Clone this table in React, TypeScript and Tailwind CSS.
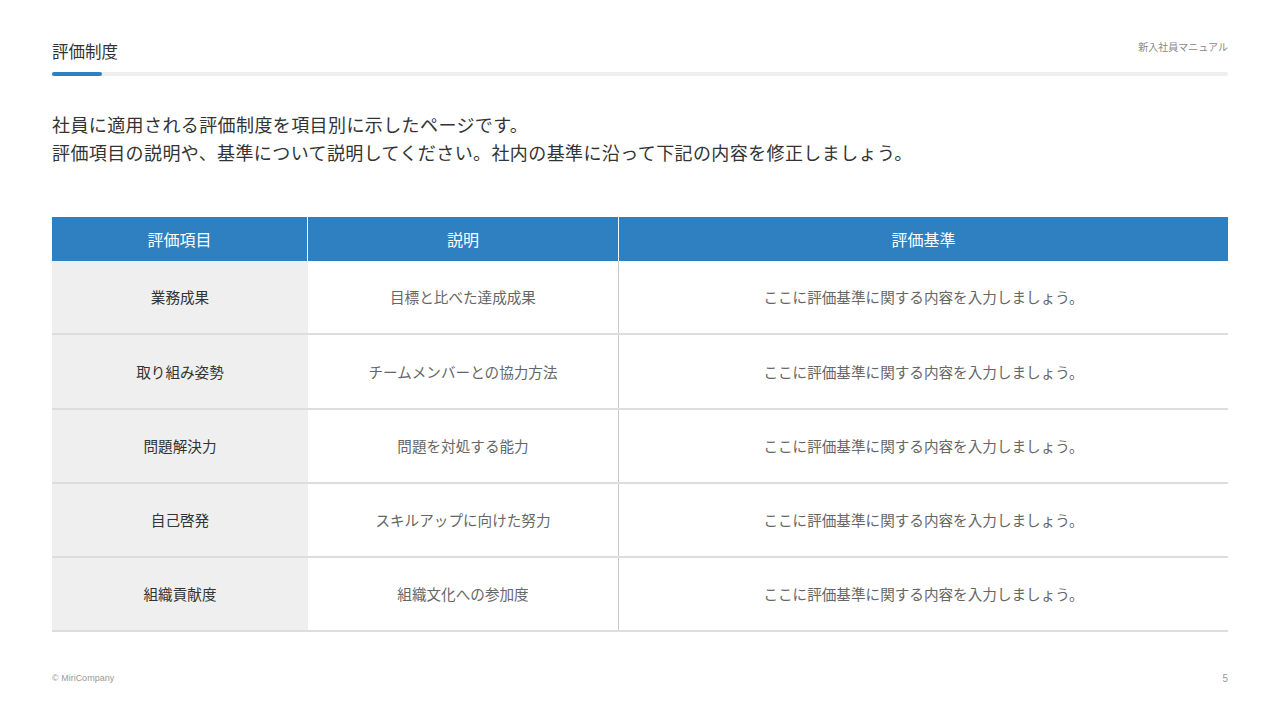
import React from 'react';

const ROWS = [
  { item: '業務成果', desc: '目標と比べた達成成果' },
  { item: '取り組み姿勢', desc: 'チームメンバーとの協力方法' },
  { item: '問題解決力', desc: '問題を対処する能力' },
  { item: '自己啓発', desc: 'スキルアップに向けた努力' },
  { item: '組織貢献度', desc: '組織文化への参加度' },
];

const CRITERIA = 'ここに評価基準に関する内容を入力しましょう。';

export default function App() {
  return (
    <div
      className="w-[1280px] h-[720px] bg-white px-[52px] flex flex-col text-[#333]"
      style={{ fontFamily: '"Noto Sans CJK JP", "Noto Sans", sans-serif' }}
    >
      {/* header */}
      <div className="flex justify-between items-end pt-[40px] h-[66px]">
        <h1 className="text-[16.5px] leading-[24px] text-[#333] mb-[3px]">評価制度</h1>
        <span className="text-[10px] leading-[14px] text-[#888] mb-[12px]">新入社員マニュアル</span>
      </div>
      <div className="mt-[6px] h-[4px] bg-[#eeeeee] rounded-full flex">
        <div className="w-[50px] h-full bg-[#2f80c0] rounded-full" />
      </div>

      {/* intro */}
      <div className="mt-[34px] text-[18px] leading-[28px] tracking-[0.4px] text-[#333]">
        <p>社員に適用される評価制度を項目別に示したページです。</p>
        <p>評価項目の説明や、基準について説明してください。社内の基準に沿って下記の内容を修正しましょう。</p>
      </div>

      {/* table */}
      <div className="mt-[51px]">
        <div className="flex h-[44px] bg-[#2f80c0] text-white text-[16px]">
          <div className="w-[256px] flex items-center justify-center border-r border-white">評価項目</div>
          <div className="w-[311px] flex items-center justify-center border-r border-white">説明</div>
          <div className="flex-1 flex items-center justify-center">評価基準</div>
        </div>
        {ROWS.map((r) => (
          <div key={r.item} className="flex h-[74.3px] border-b-2 border-[#dddddd] text-[14.6px]">
            <div className="w-[256px] bg-[#efefef] flex items-center justify-center text-[#333]">
              {r.item}
            </div>
            <div className="w-[311px] flex items-center justify-center text-[#666] border-r border-[#cccccc]">
              {r.desc}
            </div>
            <div className="flex-1 flex items-center justify-center text-[#666]">{CRITERIA}</div>
          </div>
        ))}
      </div>

      {/* footer */}
      <div className="mt-auto mb-[34px] flex justify-between items-center text-[9px] text-[#999]">
        <span style={{ fontFamily: '"Liberation Sans", sans-serif' }}>© MiriCompany</span>
        <span className="text-[10px]" style={{ fontFamily: '"Liberation Sans", sans-serif' }}>5</span>
      </div>
    </div>
  );
}
